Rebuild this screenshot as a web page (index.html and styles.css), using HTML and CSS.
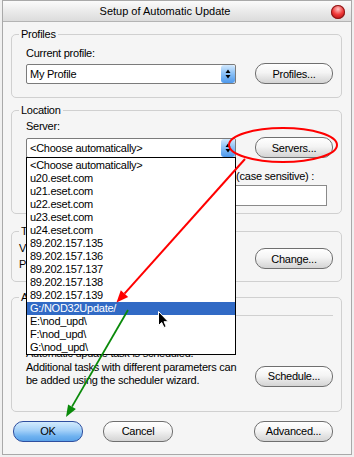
FILE: index.html
```html
<!DOCTYPE html>
<html lang="en">
<head>
    <meta charset="UTF-8">
    <title>Setup of Automatic Update</title>
    <link rel="stylesheet" href="styles.css">
</head>
<body>
    <div class="window">
        <div class="titlebar">
            <span class="title">Setup of Automatic Update</span>
            <span class="close"></span>
        </div>
        <div class="content">
            <div class="group profiles">
                <div class="legend">Profiles</div>
                <div class="label gap-6">Current profile:</div>
                <div class="row gap-3">
                    <div class="select">
                        <span class="select-text">My Profile</span>
                        <span class="spin"><svg width="14" height="18" viewBox="0 0 14 18"><path d="M4.5 8 L7 4.5 L9.5 8Z M4.5 10 L7 13.5 L9.5 10Z" fill="#000"/></svg></span>
                    </div>
                    <button class="btn">Profiles...</button>
                </div>
            </div>

            <div class="group location">
                <div class="legend">Location</div>
                <div class="label gap-3">Server:</div>
                <div class="row gap-4">
                    <div class="select">
                        <span class="select-text">&lt;Choose automatically&gt;</span>
                        <span class="spin"><svg width="14" height="18" viewBox="0 0 14 18"><path d="M4.5 8 L7 4.5 L9.5 8Z M4.5 10 L7 13.5 L9.5 10Z" fill="#000"/></svg></span>
                    </div>
                    <button class="btn">Servers...</button>
                </div>
                <div class="creds">
                    <div class="cred-col user">
                        <div class="label">Username:</div>
                        <div class="input"></div>
                    </div>
                    <div class="cred-col pass">
                        <div class="label">Password (case sensitive) :</div>
                        <div class="input"></div>
                    </div>
                </div>
            </div>

            <div class="group mode">
                <div class="legend">Type of update</div>
                <div class="mode-row">
                    <div class="mode-lines">
                        <div class="label">Virus signature database</div>
                        <div class="label second">Program components</div>
                    </div>
                    <button class="btn change">Change...</button>
                </div>
            </div>

            <div class="group sched">
                <div class="legend">Automatic update</div>
                <div class="sep"></div>
                <div class="sched-row">
                    <div class="sched-text">
                        Automatic update task is scheduled.<br>
                        Additional tasks with different parameters can<br>
                        be added using the scheduler wizard.
                    </div>
                    <button class="btn sched-btn">Schedule...</button>
                </div>
            </div>

            <div class="footer">
                <button class="btn ok">OK</button>
                <button class="btn cancel">Cancel</button>
                <button class="btn advanced">Advanced...</button>
            </div>
        </div>
    </div>

    <!-- open server list -->
    <ul class="droplist">
        <li>&lt;Choose automatically&gt;</li>
        <li>u20.eset.com</li>
        <li>u21.eset.com</li>
        <li>u22.eset.com</li>
        <li>u23.eset.com</li>
        <li>u24.eset.com</li>
        <li>89.202.157.135</li>
        <li>89.202.157.136</li>
        <li>89.202.157.137</li>
        <li>89.202.157.138</li>
        <li>89.202.157.139</li>
        <li class="selected">G:/NOD32Update/</li>
        <li>E:\nod_upd\</li>
        <li>F:\nod_upd\</li>
        <li>G:\nod_upd\</li>
    </ul>

    <!-- annotations drawn on top -->
    <svg class="marks" width="354" height="457" viewBox="0 0 354 457">
        <ellipse cx="283" cy="145" rx="54" ry="17" fill="none" stroke="#f00" stroke-width="2"/>
        <line x1="245" y1="159" x2="124.5" y2="293.6" stroke="#f00" stroke-width="2"/>
        <polygon points="116.5,302.5 128.2,296.9 120.8,290.3" fill="#f00"/>
        <line x1="128" y1="310" x2="72" y2="406.6" stroke="#0a8a0a" stroke-width="1.8"/>
        <polygon points="66,417 75.9,408.9 68.1,404.4" fill="#0a8a0a"/>
        <path d="M158.5 311.5 v14 l3.2 -3 2.3 5 2.2 -1 -2.2 -4.8 h4.3 z" fill="#000" stroke="#fff" stroke-width="1"/>
    </svg>
</body>
</html>
```

FILE: styles.css
```css
body {
    margin: 0;
    position: relative;
    width: 354px;
    height: 457px;
    background: #f0f0f0;
    font-family: "Liberation Sans", Arial, sans-serif;
    font-size: 11px;
    letter-spacing: -0.25px;
    color: #000;
    overflow: hidden;
}
.window {
    margin-left: 2px;
    width: 350px;
    height: 455px;
    box-sizing: border-box;
    border: 1px solid #a9a9a9;
    background: #f5f5f5;
}
.titlebar {
    height: 21px;
    box-sizing: border-box;
    border-bottom: 1px solid #b4b4b4;
    background: linear-gradient(#fbfbfb, #ebebeb 50%, #dcdcdc);
    display: flex;
    align-items: center;
}
.title {
    width: 324px;
    text-align: center;
    letter-spacing: 0;
}
.close {
    width: 14px;
    height: 14px;
    margin-left: 4px;
    margin-top: 2px;
    border-radius: 50%;
    background: radial-gradient(circle at 50% 30%, #ffc4c4 0, #f03a3a 45%, #a00000 100%);
    box-shadow: inset 0 0 0 1px #8a1a1a;
}
.content {
    padding: 0 9px 0 8px;
}
.group {
    border: 1px solid #d0d0d0;
    border-radius: 5px;
    padding: 0 8px 0 14px;
}
.legend {
    display: table;
    margin: -7px 0 0 -7px;
    padding: 0 2px;
    line-height: 13px;
    background: #f5f5f5;
}
.label {
    line-height: 13px;
    white-space: nowrap;
}
.gap-3 { margin-top: 3px; }
.gap-4 { margin-top: 4px; }
.gap-6 { margin-top: 6px; }

.row {
    display: flex;
    align-items: center;
    justify-content: space-between;
}
.select {
    width: 210px;
    height: 20px;
    box-sizing: border-box;
    border: 1px solid #7b7b7b;
    border-radius: 2px;
    background: #fff;
    display: flex;
    align-items: center;
    padding-left: 3px;
}
.select-text {
    flex: 1;
    white-space: nowrap;
}
.spin {
    width: 14px;
    height: 18px;
    margin-right: 0;
    border-radius: 3px;
    background: linear-gradient(#d2e8fd, #8ec3f7 45%, #4d98ec);
    display: flex;
}
.btn {
    width: 78px;
    height: 21px;
    box-sizing: border-box;
    border: 1px solid #6f6f6f;
    border-radius: 10px;
    background: linear-gradient(#ffffff, #f4f4f4 45%, #e2e2e2 75%, #d4d4d4);
    font-family: inherit;
    font-size: 11px;
    letter-spacing: -0.25px;
    color: #000;
    padding: 0;
}

.profiles {
    margin-top: 12px;
    padding-bottom: 13px;
}
.profiles .row { margin-top: 3px; }

.location {
    margin-top: 12px;
    padding-bottom: 7px;
}
.creds {
    display: flex;
    gap: 10px;
    margin-top: 12px;
}
.cred-col .input { margin-top: 2px; }
.user { width: 151px; }
.pass { width: 140px; }
.input {
    height: 21px;
    box-sizing: border-box;
    border: 1px solid #8a8a8a;
    background: #fff;
}

.mode {
    margin-top: 17px;
    padding-left: 7px;
    padding-bottom: 10px;
}
.mode .legend { margin-left: 0; }
.mode-row {
    display: flex;
    justify-content: space-between;
    align-items: flex-start;
    margin-top: 4px;
}
.mode-lines .second { margin-top: 3px; }
.change { margin-top: 6px; }

.sched {
    margin-top: 15px;
    padding-bottom: 23px;
}
.sep {
    margin-top: 11px;
    border-top: 1px solid #d0d0d0;
}
.sched-row {
    display: flex;
    justify-content: space-between;
    align-items: flex-end;
    margin-top: 31px;
}
.sched-text {
    line-height: 13.5px;
    white-space: nowrap;
}
.sched-btn { margin-bottom: 1px; }

.footer {
    display: flex;
    margin-top: 9px;
}
.ok {
    width: 70px;
    margin-left: 2px;
    border-color: #2f4f9f;
    background: linear-gradient(#d3ebfd, #a3d0f8 45%, #6fb2f0 75%, #5aa2e8);
}
.cancel {
    width: 70px;
    margin-left: 20px;
}
.advanced {
    width: 79px;
    margin-left: auto;
    margin-right: 9px;
}

.droplist {
    position: absolute;
    left: 26px;
    top: 157px;
    width: 210px;
    box-sizing: border-box;
    margin: 0;
    padding: 1px 0 0;
    list-style: none;
    background: #fff;
    border: 1px solid #000;
}
.droplist li {
    height: 13px;
    line-height: 13px;
    padding-left: 3px;
    white-space: nowrap;
}
.droplist .selected {
    background: #316ac5;
    color: #fff;
}
.marks {
    position: absolute;
    left: 0;
    top: 0;
    pointer-events: none;
}
```
